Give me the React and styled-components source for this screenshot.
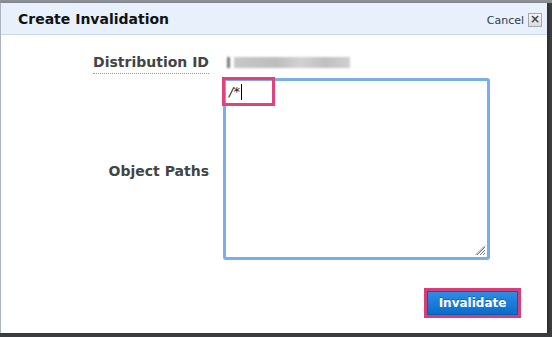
import React from 'react';
import styled, { createGlobalStyle } from 'styled-components';

const GlobalStyle = createGlobalStyle`
  html, body {
    margin: 0;
    padding: 0;
    background: #3b3e41;
  }
  body {
    font-family: "DejaVu Sans", Verdana, sans-serif;
  }
`;

export default function App() {
  return (
    <>
      <GlobalStyle />
      <Screen>
        <Dialog>
          <Header>
            <Title>Create Invalidation</Title>
            <CancelLink>
              Cancel <CloseBox>×</CloseBox>
            </CancelLink>
          </Header>
          <Body>
            <Row>
              <Label>Distribution ID</Label>
              <BlurredId />
            </Row>
            <Row align="center">
              <Label plain>Object Paths</Label>
              <PathsBox>
                <Highlight>
                  /*<Caret />
                </Highlight>
                <Grip>
                  <svg width="12" height="12" viewBox="0 0 12 12">
                    <path d="M11 3 L3 11 M11 6 L6 11 M11 9 L9 11" stroke="#777" strokeWidth="1" />
                    <path d="M11 1.5 L1.5 11" stroke="#999" strokeWidth="1" />
                  </svg>
                </Grip>
              </PathsBox>
            </Row>
            <Footer>
              <ButtonRing>
                <InvalidateButton>Invalidate</InvalidateButton>
              </ButtonRing>
            </Footer>
          </Body>
        </Dialog>
      </Screen>
    </>
  );
}

const Screen = styled.div`
  width: 552px;
  height: 337px;
  background: linear-gradient(#8c9197 0, #8c9197 3px, #3b3e41 3px);
  overflow: hidden;
`;

const Dialog = styled.div`
  margin-top: 3px;
  width: 546px;
  height: 330px;
  background: #fff;
  border-left: 1px solid #a9b3bc;
  box-shadow: 2px 0 2px rgba(0, 0, 0, 0.25);
  display: flex;
  flex-direction: column;
`;

const Header = styled.div`
  height: 31px;
  background: #e8f1fb;
  border-bottom: 1px solid #cad9e8;
  display: flex;
  align-items: center;
  justify-content: space-between;
  padding: 0 5px 0 17px;
`;

const Title = styled.h1`
  margin: 0;
  font-size: 14px;
  font-weight: bold;
  color: #111;
`;

const CancelLink = styled.span`
  display: flex;
  align-items: center;
  gap: 4px;
  font-size: 11px;
  color: #2b3a4a;
  margin-top: 3px;
`;

const CloseBox = styled.span`
  width: 12px;
  height: 12px;
  border: 1px solid #a0a8b0;
  background: linear-gradient(#f4f4f4, #dcdcdc);
  color: #444;
  font-size: 12px;
  line-height: 11px;
  text-align: center;
  font-weight: bold;
`;

const Body = styled.div`
  flex: 1;
  display: flex;
  flex-direction: column;
  padding: 19px 26px 0 0;
`;

const Row = styled.div`
  display: grid;
  grid-template-columns: 208px 1fr;
  align-items: ${p => p.align || 'start'};
  column-gap: 14px;
  margin-bottom: 4px;
`;

const Label = styled.span`
  justify-self: end;
  font-size: 14px;
  font-weight: bold;
  color: #444;
  padding-top: ${p => (p.plain ? '6px' : '0')};
  padding-bottom: 2px;
  border-bottom: ${p => (p.plain ? 'none' : '1px dotted #999')};
  line-height: 17px;
`;

const BlurredId = styled.div`
  width: 123px;
  height: 11px;
  margin-top: 3px;
  margin-left: 4px;
  background: linear-gradient(90deg, #777 0, #777 3px, #fff 3px, #fff 7px, #c8c8c8 7px, #bdbdbd 40%, #d2d2d2 60%, #c0c0c0 80%, #d0d0d0);
  filter: blur(1px);
`;

const PathsBox = styled.div`
  position: relative;
  width: 261px;
  height: 176px;
  border: 3px solid #78aee9;
  border-radius: 3px;
  background: #fff;
`;

const Highlight = styled.div`
  position: absolute;
  left: -4px;
  top: -4px;
  width: 43px;
  height: 23px;
  border: 3px solid #e2417c;
  display: flex;
  align-items: center;
  padding-left: 4px;
  font-size: 13px;
  color: #222;
  font-style: italic;
`;

const Caret = styled.span`
  display: inline-block;
  width: 1px;
  height: 16px;
  background: #000;
  margin-left: 1px;
`;

const Grip = styled.div`
  position: absolute;
  right: 1px;
  bottom: 1px;
  width: 12px;
  height: 12px;
  line-height: 0;
`;

const Footer = styled.div`
  display: flex;
  justify-content: flex-end;
  margin-top: 24px;
`;

const ButtonRing = styled.div`
  border: 3px solid #d83d7a;
`;

const InvalidateButton = styled.button`
  width: 91px;
  height: 24px;
  border: 1px solid #0a5cae;
  background: linear-gradient(#2d8ee6, #0a6ccc);
  color: #fff;
  font-family: "DejaVu Sans", Verdana, sans-serif;
  font-size: 12px;
  font-weight: bold;
  display: block;
  text-shadow: 0 -1px 0 rgba(0, 0, 0, 0.3);
`;
